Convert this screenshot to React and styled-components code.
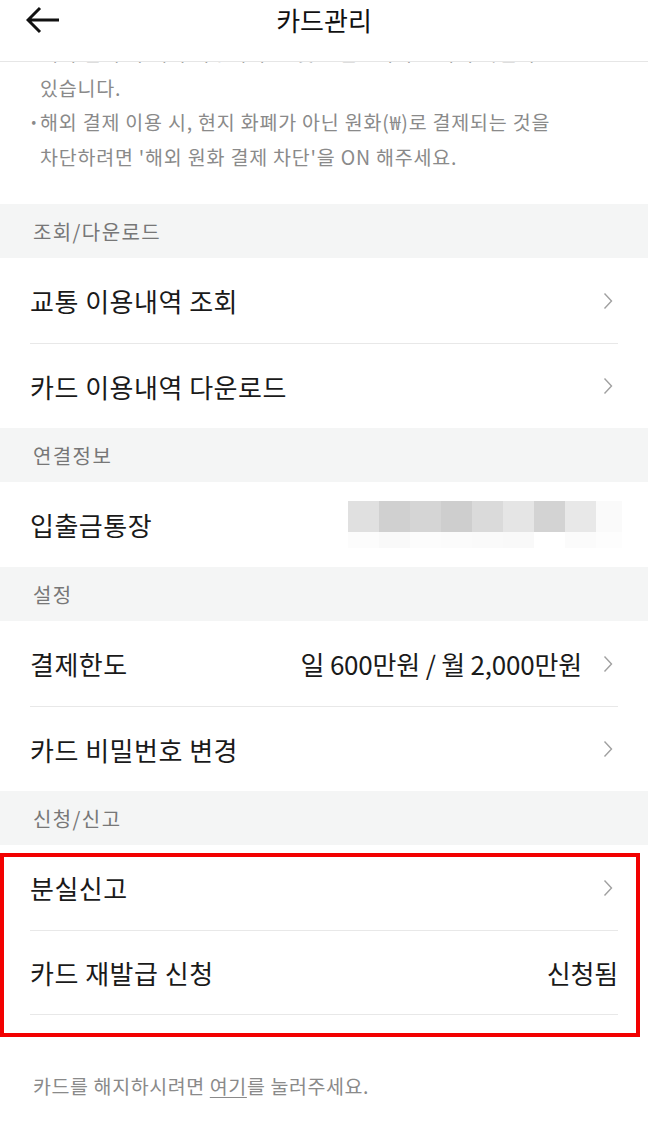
import React from "react";
import styled, { createGlobalStyle } from "styled-components";

const Global = createGlobalStyle`
  html, body { margin: 0; padding: 0; background: #fff; }
  body { font-family: "Noto Sans CJK KR", "Noto Sans", sans-serif; -webkit-font-smoothing: antialiased; }
  * { box-sizing: border-box; }
`;

const Page = styled.div`
  width: 648px;
  height: 1136px;
  display: flex;
  flex-direction: column;
  overflow: hidden;
  background: #fff;
`;

const Header = styled.header`
  height: 62px;
  flex: none;
  display: grid;
  grid-template-columns: 80px 1fr 80px;
  align-items: center;
  border-bottom: 1px solid #e6e6e6;
  padding-bottom: 21px;
  position: relative;
  z-index: 1;
  background: #fff;
`;

const BackButton = styled.button`
  border: 0;
  background: none;
  padding: 0 0 0 26px;
  display: flex;
  align-items: center;
  height: 40px;
  cursor: pointer;
`;

const Title = styled.h1`
  margin: 0;
  text-align: center;
  font-size: 26px;
  font-weight: 400;
  color: #111;
  letter-spacing: 0;
  line-height: 40px;
`;

const Scroll = styled.div`
  flex: 1;
  overflow: hidden;
`;

const Notice = styled.ul`
  list-style: none;
  margin: -26px 0 0;
  padding: 0 20px 30px 30px;
  font-size: 19.5px;
  line-height: 34.5px;
  color: #8a8a8a;
  letter-spacing: 0.8px;
  white-space: nowrap;
`;

const NoticeItem = styled.li`
  position: relative;
  padding-left: 10px;
  &::before {
    content: ${(p) => (p.$bullet ? '"·"' : '""')};
    position: absolute;
    left: -2px;
    top: 0;
    font-weight: 700;
  }
`;

const SectionHeader = styled.div`
  height: 54px;
  background: #f4f5f5;
  display: flex;
  align-items: center;
  padding: 0 33px;
  font-size: 20px;
  color: #777;
  letter-spacing: 1.4px;
`;

const List = styled.div`
  display: flex;
  flex-direction: column;
  padding: 0 30px;
  position: relative;
`;

const Row = styled.div`
  height: 85px;
  display: flex;
  align-items: center;
  justify-content: space-between;
  gap: 12px;
  border-top: ${(p) => (p.$first ? "0" : "1px solid #e8e8e8")};
  border-bottom: ${(p) => (p.$bottom ? "1px solid #e8e8e8" : "0")};
`;

const RowLabel = styled.span`
  font-size: 26px;
  color: #1a1a1a;
  letter-spacing: 0.5px;
`;

const RowRight = styled.span`
  display: flex;
  align-items: center;
  gap: 20px;
  font-size: 26px;
  color: #1a1a1a;
  letter-spacing: -0.2px;
`;

const Chevron = () => (
  <svg width="12" height="18" viewBox="0 0 12 18" style={{ marginRight: "4px" }}>
    <path d="M2.5 1.5 L9.5 9 L2.5 16.5" fill="none" stroke="#a0a0a0" strokeWidth="1.4" />
  </svg>
);

const Blur = styled.div`
  display: grid;
  grid-template-columns: repeat(8, 31px) 26px;
  grid-template-rows: 31px 16px;
  margin-right: -4px;
`;

const Cell = styled.div`
  background: ${(p) => p.$c};
`;

const Highlight = styled.div`
  position: absolute;
  top: 8px;
  left: 0;
  right: 8px;
  bottom: -22px;
  border: 4px solid #f20000;
  pointer-events: none;
`;

const Footer = styled.p`
  margin: 0;
  padding: 57px 33px 0;
  font-size: 19.5px;
  line-height: 28px;
  color: #8a8a8a;
  letter-spacing: 0.6px;
`;

const FooterLink = styled.a`
  color: #8a8a8a;
  text-decoration: underline;
  text-underline-offset: 3px;
`;

const GroupWrap = styled.div`
  position: relative;
`;

const blurTop = ["#e0e0e0", "#d0d0d0", "#d5d5d5", "#cecece", "#dadada", "#e5e5e5", "#d3d3d3", "#e8e8e8", "#fafafa"];
const blurBottom = ["#fcfcfc", "#f9f9f9", "#fcfcfc", "#fbfbfb", "#fafafa", "#f9f9f9", "#ffffff", "#fbfbfb", "#fdfdfd"];

export default function App() {
  return (
    <>
      <Global />
      <Page>
        <Header>
          <BackButton aria-label="뒤로">
            <svg width="34" height="28" viewBox="0 0 34 28">
              <path d="M2 14 H33 M14 2 L2 14 L14 26" fill="none" stroke="#111" strokeWidth="3" strokeLinecap="butt" strokeLinejoin="miter" />
            </svg>
          </BackButton>
          <Title>카드관리</Title>
          <span />
        </Header>
        <Scroll>
          <Notice>
            <NoticeItem>해외 결제 시 해외 이용 수수료 및 브랜드 수수료가 부과될 수</NoticeItem>
            <NoticeItem>있습니다.</NoticeItem>
            <NoticeItem $bullet>해외 결제 이용 시, 현지 화폐가 아닌 원화(₩)로 결제되는 것을</NoticeItem>
            <NoticeItem>차단하려면 '해외 원화 결제 차단'을 ON 해주세요.</NoticeItem>
          </Notice>

          <SectionHeader>조회/다운로드</SectionHeader>
          <List>
            <Row $first>
              <RowLabel>교통 이용내역 조회</RowLabel>
              <RowRight><Chevron /></RowRight>
            </Row>
            <Row>
              <RowLabel>카드 이용내역 다운로드</RowLabel>
              <RowRight><Chevron /></RowRight>
            </Row>
          </List>

          <SectionHeader>연결정보</SectionHeader>
          <List>
            <Row $first>
              <RowLabel>입출금통장</RowLabel>
              <Blur>
                {blurTop.map((c, i) => <Cell key={"t" + i} $c={c} />)}
                {blurBottom.map((c, i) => <Cell key={"b" + i} $c={c} />)}
              </Blur>
            </Row>
          </List>

          <SectionHeader>설정</SectionHeader>
          <List>
            <Row $first>
              <RowLabel>결제한도</RowLabel>
              <RowRight>일 600만원 / 월 2,000만원<Chevron /></RowRight>
            </Row>
            <Row>
              <RowLabel>카드 비밀번호 변경</RowLabel>
              <RowRight><Chevron /></RowRight>
            </Row>
          </List>

          <SectionHeader>신청/신고</SectionHeader>
          <GroupWrap>
            <List>
              <Row $first>
                <RowLabel>분실신고</RowLabel>
                <RowRight><Chevron /></RowRight>
              </Row>
              <Row $bottom>
                <RowLabel>카드 재발급 신청</RowLabel>
                <RowRight>신청됨</RowRight>
              </Row>
            </List>
            <Highlight />
          </GroupWrap>

          <Footer>
            카드를 해지하시려면 <FooterLink>여기</FooterLink>를 눌러주세요.
          </Footer>
        </Scroll>
      </Page>
    </>
  );
}
